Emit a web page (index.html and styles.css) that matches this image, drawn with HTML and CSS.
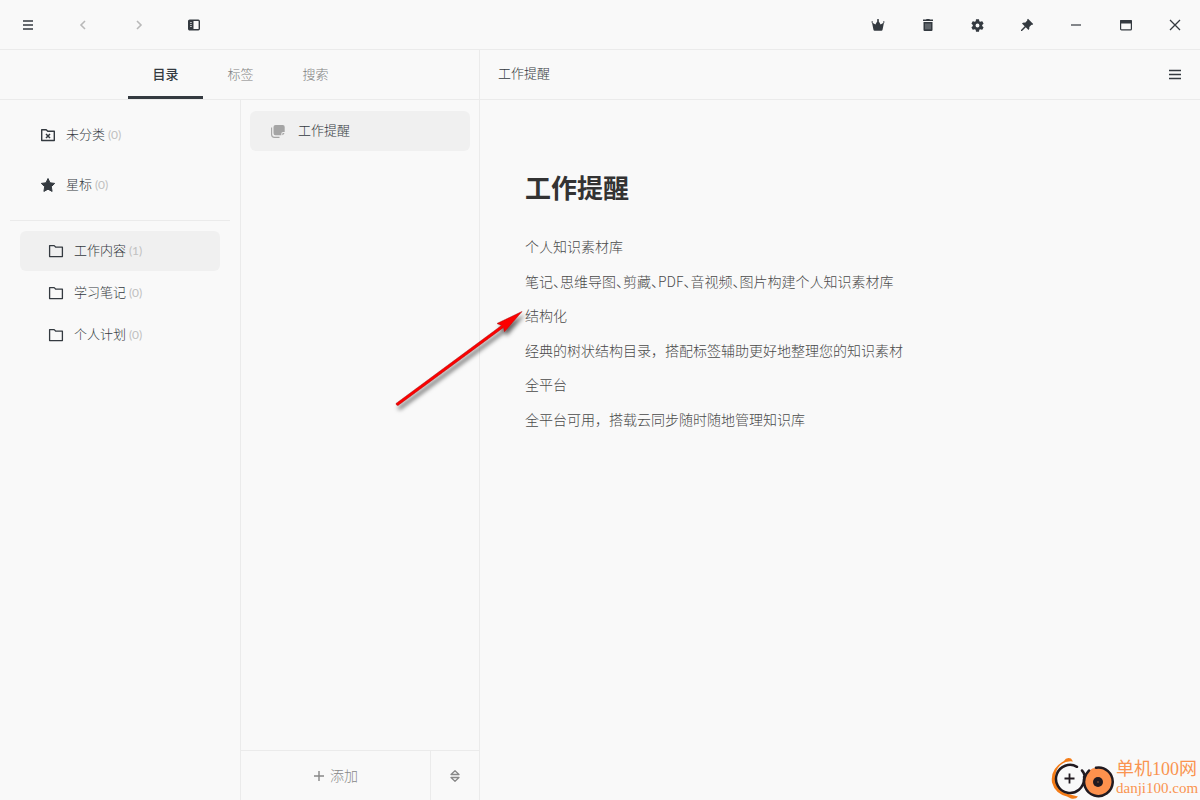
FILE: index.html
```
<!DOCTYPE html>
<html lang="zh-CN">
<head>
<meta charset="utf-8">
<meta name="viewport" content="width=device-width, initial-scale=1">
<title>工作提醒</title>
<link rel="stylesheet" href="styles.css">
</head>
<body>
<div class="app">
  <header class="toolbar">
    <div class="tools tools-left">
      <button class="icon-btn" aria-label="菜单"><svg width="10" height="10" viewBox="0 0 10 10"><path d="M0 1h10M0 5h10M0 9h10" stroke="currentColor" stroke-width="1.6"/></svg></button>
      <button class="icon-btn muted" aria-label="后退"><svg width="10" height="10" viewBox="0 0 10 10"><path d="M7 1 3 5l4 4" fill="none" stroke="currentColor" stroke-width="1.6"/></svg></button>
      <button class="icon-btn muted" aria-label="前进"><svg width="10" height="10" viewBox="0 0 10 10"><path d="m3 1 4 4-4 4" fill="none" stroke="currentColor" stroke-width="1.6"/></svg></button>
      <button class="icon-btn" aria-label="侧栏"><svg width="12" height="12" viewBox="0 0 12 12"><rect x=".7" y="1.2" width="10.600" height="9.600" rx="1" fill="none" stroke="currentColor" stroke-width="1.4"/><path d="M1 1h4.500v10H1z" fill="currentColor"/><path d="M2.200 3.500h1.500M2.200 5.500h1.500M2.200 7.500h1.500" stroke="#f9f9f9" stroke-width=".8"/></svg></button>
    </div>
    <div class="tools tools-right">
      <button class="icon-btn" aria-label="会员"><svg width="14" height="14" viewBox="0 0 14 14"><path d="M2.400 11.600 1 4.600 4.400 6.600 7 2l2.600 4.600L13 4.600l-1.400 7q-.2 1.200-1.200 1.200H3.600q-1 0-1.200-1.200z" fill="currentColor"/><circle cx="7" cy="2" r="1" fill="currentColor"/><circle cx="1.200" cy="4" r=".8" fill="currentColor"/><circle cx="12.800" cy="4" r=".8" fill="currentColor"/></svg></button>
      <button class="icon-btn" aria-label="回收站"><svg width="12" height="12" viewBox="0 0 12 12"><path d="M1 .6h3l.7-.6h2.600L8 .6h3V2H1zM1.500 3h9v8q0 1-1 1h-7q-1 0-1-1z" fill="currentColor"/><path d="M4 4.500v5.800M6 4.500v5.800M8 4.500v5.800" stroke="#8b9095" stroke-width="1"/></svg></button>
      <button class="icon-btn" aria-label="设置"><svg width="13" height="13" viewBox="2 2 20 20"><path fill="currentColor" fill-rule="evenodd" d="M19.140 12.940c.04-.3.060-.61.060-.94s-.02-.64-.07-.94l2.030-1.580c.18-.14.23-.41.120-.61l-1.920-3.320c-.12-.22-.37-.29-.59-.22l-2.390.96c-.5-.38-1.030-.7-1.620-.94l-.36-2.540c-.04-.24-.24-.41-.48-.41h-3.840c-.24 0-.43.170-.47.410l-.36 2.540c-.59.240-1.130.57-1.620.94l-2.390-.96c-.22-.08-.47 0-.59.220L2.740 8.870c-.12.210-.08.470.120.610l2.030 1.580c-.05.300-.09.630-.09.940s.02.640.070.940l-2.030 1.580c-.18.140-.23.410-.12.610l1.920 3.320c.12.220.37.290.59.220l2.390-.96c.5.380 1.030.7 1.620.940l.36 2.540c.05.240.24.410.48.410h3.840c.24 0 .44-.17.47-.41l.36-2.540c.59-.24 1.130-.56 1.620-.94l2.390.96c.22.080.47 0 .59-.22l1.920-3.320c.12-.22.070-.47-.12-.61zM12 15a3 3 0 1 1 0-6 3 3 0 0 1 0 6z"/></svg></button>
      <button class="icon-btn" aria-label="置顶"><svg width="14" height="14" viewBox="0 0 14 14"><path d="M8 .8 13.200 6l-1 .900-.7-.2-2.200 2.200q.4 1.900-.8 3.100L5.800 9.300 2 13H1v-1l3.700-3.800L2 5.500q1.200-1.200 3.100-.8l2.200-2.200-.2-.8z" fill="currentColor"/></svg></button>
      <button class="icon-btn" aria-label="最小化"><svg width="12" height="12" viewBox="0 0 12 12"><path d="M1 6h10" stroke="currentColor" stroke-width="1.200"/></svg></button>
      <button class="icon-btn" aria-label="最大化"><svg width="12" height="12" viewBox="0 0 12 12"><rect x=".6" y="1.500" width="10.800" height="9.400" rx="1" fill="none" stroke="currentColor" stroke-width="1.200"/><path d="M0 4.600V2q0-1 1-1h10q1 0 1 1v2.600z" fill="currentColor"/></svg></button>
      <button class="icon-btn" aria-label="关闭"><svg width="12" height="12" viewBox="0 0 12 12"><path d="m1 1 10 10M11 1 1 11" stroke="currentColor" stroke-width="1.300"/></svg></button>
    </div>
  </header>

  <div class="workspace">
    <section class="browser">
      <nav class="tabs">
        <button class="tab active">目录</button>
        <button class="tab">标签</button>
        <button class="tab">搜索</button>
      </nav>
      <div class="columns">
        <nav class="folders">
          <a class="entry" href="#uncategorized"><svg width="16" height="16" viewBox="0 0 16 16"><path d="M1.700 13.500V2.700h4.500l1.600 1.600h6.500v9.200z" fill="none" stroke="currentColor" stroke-width="1.400" stroke-linejoin="round"/><path d="m6 7 4 4M10 7l-4 4" stroke="currentColor" stroke-width="1.500"/></svg><span>未分类 <small>(0)</small></span></a>
          <a class="entry" href="#starred"><svg width="16" height="16" viewBox="0 0 16 16"><path d="m8 1.500 2 4.300 4.700.6-3.400 3.300.8 4.700L8 12.200l-4.100 2.200.8-4.700L1.300 6.400 6 5.800z" fill="currentColor" stroke="currentColor" stroke-linejoin="round"/></svg><span>星标 <small>(0)</small></span></a>
          <div class="tree">
            <a class="folder selected" href="#work"><svg width="16" height="16" viewBox="0 0 16 16"><path d="M1.600 13.600V2.600h4.600l1.600 1.600h6.600v9.400z" fill="none" stroke="currentColor" stroke-width="1.300" stroke-linejoin="round"/></svg><span>工作内容 <small>(1)</small></span></a>
            <a class="folder" href="#study"><svg width="16" height="16" viewBox="0 0 16 16"><path d="M1.600 13.600V2.600h4.600l1.600 1.600h6.600v9.400z" fill="none" stroke="currentColor" stroke-width="1.300" stroke-linejoin="round"/></svg><span>学习笔记 <small>(0)</small></span></a>
            <a class="folder" href="#plan"><svg width="16" height="16" viewBox="0 0 16 16"><path d="M1.600 13.600V2.600h4.600l1.600 1.600h6.600v9.400z" fill="none" stroke="currentColor" stroke-width="1.300" stroke-linejoin="round"/></svg><span>个人计划 <small>(0)</small></span></a>
          </div>
        </nav>
        <div class="notes">
          <div class="note-list">
            <a class="note" href="#note"><svg width="16" height="16" viewBox="0 0 16 16"><path d="M5.500 2h7.300q1.900 0 1.900 1.900V9H13q-1.700 0-1.700 1.700v1.500H5.500q-2 0-2-2V4q0-2 2-2z" fill="#a5a5a5"/><path d="M14.500 10q-.3 1.500-2.200 2.200v-1.400q0-.8.8-.8z" fill="#a5a5a5"/><path d="M1.600 4.500v7q0 2.900 2.900 2.900h5" fill="none" stroke="#a5a5a5" stroke-width="1.100"/></svg><span>工作提醒</span></a>
          </div>
          <footer class="note-actions">
            <button class="add"><svg width="12" height="12" viewBox="0 0 12 12"><path d="M6 1v10M1 6h10" stroke="currentColor" stroke-width="1.400"/></svg><span>添加</span></button>
            <button class="sort" aria-label="排序"><svg width="12" height="14" viewBox="0 0 12 14"><path d="M2 5.500 6 1.700l4 3.800zM2 8.500l4 3.800 4-3.800z" fill="none" stroke="currentColor" stroke-width="1.300" stroke-linejoin="round"/></svg></button>
          </footer>
        </div>
      </div>
    </section>

    <main class="editor">
      <header class="editor-bar">
        <span>工作提醒</span>
        <button class="icon-btn" aria-label="笔记菜单"><svg width="12" height="11" viewBox="0 0 12 11"><path d="M0 1.500h12M0 5.500h12M0 9.500h12" stroke="currentColor" stroke-width="1.300"/></svg></button>
      </header>
      <article class="document">
        <h1>工作提醒</h1>
        <section class="topic"><p>个人知识素材库</p><p class="compact">笔记、思维导图、剪藏、PDF、音视频、图片构建个人知识素材库</p></section>
        <section class="topic"><p>结构化</p><p>经典的树状结构目录，搭配标签辅助更好地整理您的知识素材</p></section>
        <section class="topic"><p>全平台</p><p>全平台可用，搭载云同步随时随地管理知识库</p></section>
      </article>
    </main>
  </div>

  <svg class="arrow" width="150" height="120" viewBox="385 300 150 120" aria-hidden="true">
    <defs><filter id="shade" x="-20%" y="-20%" width="140%" height="140%"><feDropShadow dx="2" dy="4" stdDeviation="2" flood-color="#000" flood-opacity=".6"/></filter></defs>
    <g filter="url(#shade)" fill="#fd0000" stroke="#a01010" stroke-width=".5"><path d="M396 403.500 501.500 325.500 497 323.500 522 311.500 504.500 331.800 503.500 327.500 398 405.500q-2 0-2-2z"/></g>
  </svg>

  <div class="watermark">
    <svg width="64" height="44" viewBox="1050 756 64 44" aria-hidden="true">
      <path d="M1064 761q2-4 7-2.500l2 3q-8-1-13 4-6 6-4 16 2 8 10 12l12 3q-2 3-7 2l-4-2q-12-3-15-14-2-14 12-21.500z" fill="#f47c17"/>
      <circle cx="1098" cy="782" r="14.500" fill="#fd914d"/>
      <path d="M1077 766.800A14 14 0 1 0 1084 779M1082 770.500q2 2 2.500 5M1084 777l5-6.500M1096 767.700a14.300 14.300 0 1 1-10 7" fill="none" stroke="#211a20" stroke-width="2.500" stroke-linecap="round"/>
      <path d="M1069.500 773.500v10M1064.500 778.500h10" stroke="#211a20" stroke-width="1.800"/>
      <circle cx="1098" cy="782" r="5" fill="#211a20"/><circle cx="1098" cy="782" r="1" fill="#69432f"/>
    </svg>
    <div class="brand"><span class="brand-name">单机100网</span><span class="brand-url">danji100.com</span></div>
  </div>
</div>
</body>
</html>
```

FILE: styles.css
```
* { box-sizing: border-box; }

body {
  margin: 0;
  background: #f9f9f9;
  color: #343a40;
  font: 300 13px/20px "Noto Sans CJK SC", sans-serif;
}

button {
  border: 0;
  padding: 0;
  background: none;
  color: inherit;
  font: inherit;
  cursor: pointer;
}

a { color: inherit; text-decoration: none; }
svg { display: block; flex: none; }
h1, p { margin: 0; }

.app {
  position: relative;
  display: flex;
  flex-direction: column;
  min-height: 100vh;
}

.toolbar {
  display: flex;
  justify-content: space-between;
  height: 50px;
  padding: 0 5px 0 8px;
  border-bottom: 1px solid #ebebeb;
}

.tools { display: flex; justify-content: space-between; }
.tools-left { width: 206px; }
.tools-right { width: 337px; }

.icon-btn {
  display: grid;
  place-items: center;
  width: 40px;
  height: 50px;
}
.muted { color: #b9b9b9; }

.workspace { display: flex; flex: 1; }

.browser {
  display: flex;
  flex-direction: column;
  flex: none;
  width: 480px;
  border-right: 1px solid #ebebeb;
}

.tabs {
  display: flex;
  justify-content: center;
  height: 50px;
  padding-left: 2px;
  border-bottom: 1px solid #ebebeb;
}

.tab {
  width: 75px;
  padding-top: 1px;
  color: #808080;
  border-bottom: 3px solid transparent;
}
.tab.active {
  color: #343a40;
  font-weight: 500;
  border-bottom-color: #343a40;
}

.columns { display: flex; flex: 1; }

.folders { flex: none; width: 240px; padding: 10px; }

.entry, .folder, .note { display: flex; align-items: center; gap: 10px; }
.entry { height: 50px; padding-left: 30px; }
.entry > span, .folder > span, .note > span, .add > span { padding-bottom: 2px; }
.folders small { font: 400 12px Lato, sans-serif; color: #c0c0c0; }

.tree {
  display: flex;
  flex-direction: column;
  gap: 2px;
  margin-top: 10px;
  padding: 10px;
  border-top: 1px solid #ebebeb;
}
.folder { height: 40px; padding-left: 28px; border-radius: 6px; }
.folder.selected, .note { background: #f0f0f0; }

.notes {
  display: flex;
  flex-direction: column;
  flex: 1;
  border-left: 1px solid #ebebeb;
}
.note-list { flex: 1; padding: 11px 9px; }
.note { height: 40px; padding-left: 20px; gap: 12px; border-radius: 6px; }

.note-actions {
  display: flex;
  height: 50px;
  border-top: 1px solid #ebebeb;
  color: #888;
}
.add {
  display: flex;
  flex: 1;
  align-items: center;
  justify-content: center;
  gap: 5px;
  font-size: 14px;
}
.sort {
  display: grid;
  place-items: center;
  width: 49px;
  border-left: 1px solid #ebebeb;
}

.editor { flex: 1; min-width: 0; }
.editor-bar {
  display: flex;
  align-items: center;
  justify-content: space-between;
  height: 50px;
  padding: 0 5px 0 18px;
  border-bottom: 1px solid #ebebeb;
}
.editor-bar > span { padding-bottom: 3px; }

.document {
  display: flex;
  flex-direction: column;
  gap: 10px;
  padding: 67px 45px 40px;
  color: #4a4a4a;
  font-size: 14px;
  line-height: 24px;
}
.document h1 {
  margin-bottom: 17px;
  color: #333;
  font-size: 26px;
  font-weight: 700;
  line-height: 40px;
}
.topic { display: flex; flex-direction: column; gap: 11px; }
.compact { font-feature-settings: "halt"; }

.arrow {
  position: absolute;
  left: 385px;
  top: 300px;
  pointer-events: none;
}

.watermark {
  position: absolute;
  right: 2px;
  bottom: 0;
  display: flex;
  align-items: center;
  gap: 2px;
  color: #fa9450;
}
.brand { display: flex; flex-direction: column; width: 82px; white-space: nowrap; }
.brand-name { font: 400 18px/20px "Liberation Serif", "Noto Sans CJK SC", serif; }
.brand-url { font: 400 15px/18px "Liberation Serif", serif; }
```
